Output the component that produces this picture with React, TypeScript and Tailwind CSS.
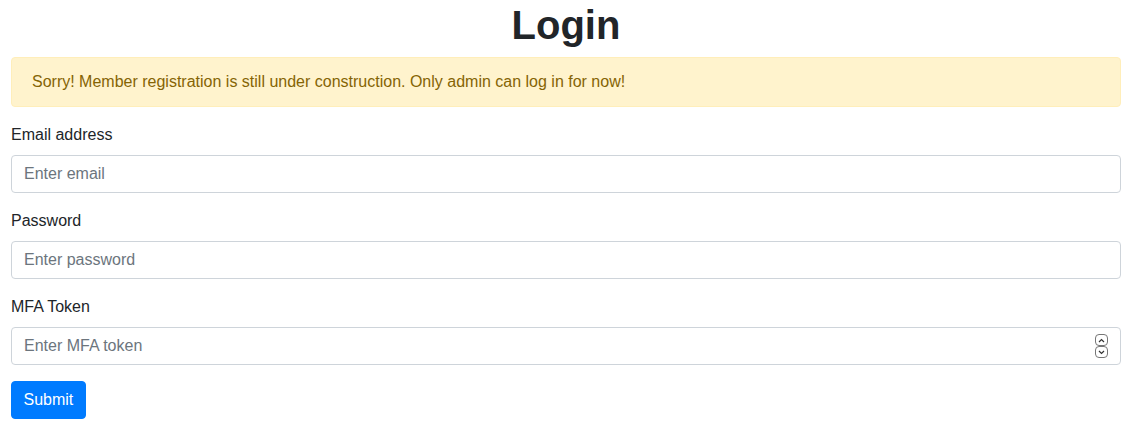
import React from 'react';

const inputCls =
  'block w-full h-[38px] px-3 py-1.5 text-base leading-6 text-[#495057] bg-white border border-[#ced4da] rounded placeholder:text-[#6c757d] outline-none';

function Spinner() {
  // up/down stepper drawn over the MFA field
  return (
    <div className="absolute right-[13px] top-1/2 -translate-y-1/2 flex flex-col">
      <span className="w-[13px] h-[12px] border border-[#767676] rounded-[4px] flex items-center justify-center bg-white">
        <svg width="7" height="5" viewBox="0 0 7 5" fill="none" stroke="#333" strokeWidth="1.2">
          <path d="M1 4 L3.5 1.5 L6 4" />
        </svg>
      </span>
      <span className="w-[13px] h-[12px] border border-[#767676] rounded-[4px] flex items-center justify-center bg-white">
        <svg width="7" height="5" viewBox="0 0 7 5" fill="none" stroke="#333" strokeWidth="1.2">
          <path d="M1 1 L3.5 3.5 L6 1" />
        </svg>
      </span>
    </div>
  );
}

export default function App() {
  return (
    <div className="px-[11px] pt-px bg-white text-[#212529] font-['Liberation_Sans',Arial,sans-serif] text-base leading-6">
      <h1 className="text-center text-[40px] leading-[48px] font-bold mb-2">Login</h1>

      {/* Notice */}
      <div className="mb-4 px-5 py-3 bg-[#fff3cd] border border-[#ffeeba] text-[#856404] rounded">
        Sorry! Member registration is still under construction. Only admin can log in for now!
      </div>

      <form onSubmit={(e) => e.preventDefault()}>
        <div className="mb-4">
          <label className="block mb-2">Email address</label>
          <input type="email" placeholder="Enter email" className={inputCls} />
        </div>
        <div className="mb-4">
          <label className="block mb-2">Password</label>
          <input type="password" placeholder="Enter password" className={inputCls} />
        </div>
        <div className="mb-4">
          <label className="block mb-2">MFA Token</label>
          <div className="relative">
            <input type="text" inputMode="numeric" placeholder="Enter MFA token" className={inputCls} />
            <Spinner />
          </div>
        </div>
        <button
          type="submit"
          className="h-[38px] px-[11.5px] py-1.5 bg-[#007bff] border border-[#007bff] text-white rounded leading-6"
        >
          Submit
        </button>
      </form>
    </div>
  );
}
